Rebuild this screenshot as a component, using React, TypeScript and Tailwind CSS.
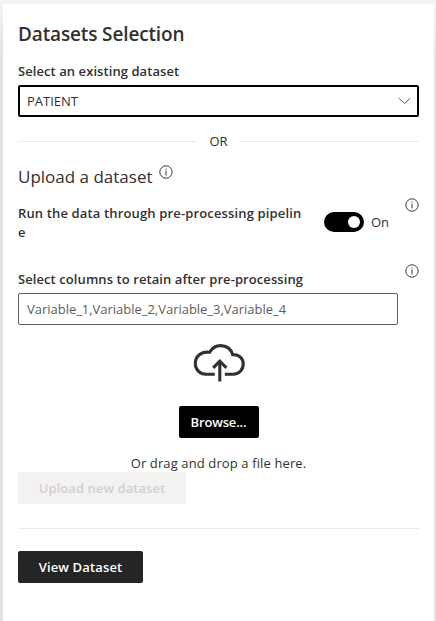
import React from "react";

function InfoIcon() {
  return (
    <svg width="14" height="14" viewBox="0 0 14 14" fill="none" className="block shrink-0">
      <circle cx="7" cy="7" r="6.2" stroke="#3b3a39" strokeWidth="1" />
      <rect x="6.5" y="5.6" width="1" height="4.8" fill="#3b3a39" />
      <rect x="6.5" y="3.5" width="1" height="1.1" fill="#3b3a39" />
    </svg>
  );
}

function CloudUpload() {
  return (
    <svg width="52" height="40" viewBox="0 0 52 40" fill="none" stroke="#323130" strokeWidth="3.1" className="block">
      <path d="M21.8 31.2H13C6.7 31.2 2.3 26.5 2.3 20.5C2.3 13.4 8.2 8.2 16.6 9.3C19.3 4.9 23 2.6 27.5 2.6C33.4 2.6 38 6.1 39.8 11.7C46.2 11.3 50.2 15.7 50.2 21C50.2 26.8 46 31.2 40.3 31.2H31.8" />
      <path d="M26.8 38.5V18.5" />
      <path d="M20.2 24.8L26.8 18.2L33.4 24.8" />
    </svg>
  );
}

export default function App() {
  return (
    <div className="h-[621px] w-[436px] overflow-hidden bg-[linear-gradient(#f3f3f3_4px,#e2e2e2_56px)] pl-[3px] pt-1 font-['Open_Sans','Noto_Sans',sans-serif] text-[#323130]">
      <main className="h-[640px] w-[431px] bg-white pl-[15px] pt-[18px] text-[13px] leading-5">
        <div className="w-[401px]">
          <h1 className="h-6 whitespace-nowrap text-[19px] font-semibold leading-6 tracking-[-0.14px]"><span>Datasets Selection</span></h1>
          <div className="mt-[15px] h-6 whitespace-nowrap font-semibold tracking-[0.07px]"><span>Select an existing dataset</span></div>
          <div className="flex h-8 items-center justify-between rounded-[2px] border-2 border-black pl-[7px] pr-[6px]">
            <span>PATIENT</span>
            <svg width="13" height="8" viewBox="0 0 13 8" fill="none" stroke="#605e5c" className="block">
              <path d="M.7 1L6.5 6.6L12.3 1" />
            </svg>
          </div>
          <div className="mt-[14px] flex h-5 items-center justify-between">
            <div className="h-px w-[179px] bg-[#edebe9]" />
            <span>OR</span>
            <div className="h-px w-[179px] bg-[#edebe9]" />
          </div>
          <div className="mt-[14px] flex h-6 gap-[7px]">
            <h2 className="w-[134px] whitespace-nowrap text-[17px] leading-6"><span>Upload a dataset</span></h2>
            <InfoIcon />
          </div>
          <div className="mt-[9px] flex h-[66px]">
            <div className="w-[306px] whitespace-nowrap pt-[6px] font-semibold leading-[19px] tracking-[0.145px]"><span>Run the data through pre-processing pipelin</span><br />e</div>
            <div className="mt-[14px] flex h-5 w-10 items-center justify-end rounded-full bg-black pr-1">
              <div className="size-3 rounded-full bg-white" />
            </div>
            <span className="ml-[7px] mt-[14px] w-[34px]">On</span>
            <InfoIcon />
          </div>
          <div className="flex h-[61px] justify-between">
            <div className="w-[380px] pt-[5px]">
              <div className="h-6 whitespace-nowrap font-semibold tracking-[0.08px]"><span>Select columns to retain after pre-processing</span></div>
              <div className="flex h-8 items-center whitespace-nowrap rounded-[2px] border border-[#605e5c] pl-2 tracking-[-0.02px] text-[#605e5c]"><span>Variable_1,Variable_2,Variable_3,Variable_4</span></div>
            </div>
            <InfoIcon />
          </div>
          <div className="flex flex-col items-center pt-[18px]">
            <CloudUpload />
            <div className="mt-[23px] flex h-8 w-20 items-center justify-center rounded-[2px] bg-black font-semibold tracking-[-0.15px] text-white"><span>Browse...</span></div>
            <div className="mt-[15px] h-[19px] whitespace-nowrap tracking-[0.12px]"><span>Or drag and drop a file here.</span></div>
          </div>
          <div className="flex h-8 w-[168px] items-center justify-center whitespace-nowrap rounded-[2px] bg-[#f3f2f1] font-semibold tracking-[0.06px] text-[#d2d0ce]"><span>Upload new dataset</span></div>
          <div className="mt-6 h-px bg-[#edebe9]" />
          <div className="mt-[22px] flex h-8 w-[125px] items-center justify-center whitespace-nowrap rounded-[2px] bg-[#252525] font-semibold tracking-[0.14px] text-white"><span>View Dataset</span></div>
        </div>
      </main>
    </div>
  );
}
